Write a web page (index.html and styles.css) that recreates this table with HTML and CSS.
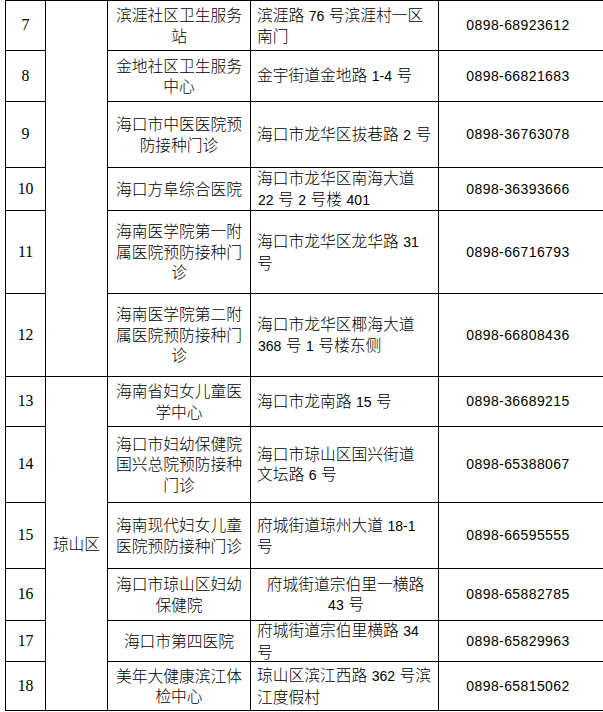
FILE: index.html
```html
<!DOCTYPE html>
<html lang="zh-CN">
<head>
<meta charset="utf-8">
<title>预防接种门诊</title>
<link rel="stylesheet" href="styles.css">
</head>
<body>
<div class="grid">
  <div class="c no">7</div>
  <div class="c dist span"></div>
  <div class="c name">滨涯社区卫生服务站</div>
  <div class="c addr"><p class="t">滨涯路 <span class="n">76</span> 号滨涯村一区<br>南门</p></div>
  <div class="c tel">0898-68923612</div>

  <div class="c no">8</div>
  <div class="c name">金地社区卫生服务中心</div>
  <div class="c addr"><p class="t">金宇街道金地路 <span class="n">1-4</span> 号</p></div>
  <div class="c tel">0898-66821683</div>

  <div class="c no">9</div>
  <div class="c name">海口市中医医院预防接种门诊</div>
  <div class="c addr"><p class="t">海口市龙华区拔巷路 <span class="n">2</span> 号</p></div>
  <div class="c tel">0898-36763078</div>

  <div class="c no">10</div>
  <div class="c name">海口方阜综合医院</div>
  <div class="c addr"><p class="t">海口市龙华区南海大道<br><span class="n">22</span> 号 <span class="n">2</span> 号楼 <span class="n">401</span></p></div>
  <div class="c tel">0898-36393666</div>

  <div class="c no">11</div>
  <div class="c name">海南医学院第一附属医院预防接种门诊</div>
  <div class="c addr"><p class="t">海口市龙华区龙华路 <span class="n">31</span><br>号</p></div>
  <div class="c tel">0898-66716793</div>

  <div class="c no">12</div>
  <div class="c name">海南医学院第二附属医院预防接种门诊</div>
  <div class="c addr"><p class="t">海口市龙华区椰海大道<br><span class="n">368</span> 号 <span class="n">1</span> 号楼东侧</p></div>
  <div class="c tel">0898-66808436</div>

  <div class="c no">13</div>
  <div class="c dist span">琼山区</div>
  <div class="c name">海南省妇女儿童医学中心</div>
  <div class="c addr"><p class="t">海口市龙南路 <span class="n">15</span> 号</p></div>
  <div class="c tel">0898-36689215</div>

  <div class="c no">14</div>
  <div class="c name">海口市妇幼保健院国兴总院预防接种门诊</div>
  <div class="c addr"><p class="t">海口市琼山区国兴街道<br>文坛路 <span class="n">6</span> 号</p></div>
  <div class="c tel">0898-65388067</div>

  <div class="c no">15</div>
  <div class="c name">海南现代妇女儿童医院预防接种门诊</div>
  <div class="c addr"><p class="t">府城街道琼州大道 <span class="n">18-1</span><br>号</p></div>
  <div class="c tel">0898-66595555</div>

  <div class="c no">16</div>
  <div class="c name">海口市琼山区妇幼保健院</div>
  <div class="c addr"><p class="t center">府城街道宗伯里一横路<br><span class="n">43</span> 号</p></div>
  <div class="c tel">0898-65882785</div>

  <div class="c no">17</div>
  <div class="c name">海口市第四医院</div>
  <div class="c addr"><p class="t">府城街道宗伯里横路 <span class="n">34</span><br>号</p></div>
  <div class="c tel">0898-65829963</div>

  <div class="c no">18</div>
  <div class="c name">美年大健康滨江体检中心</div>
  <div class="c addr"><p class="t">琼山区滨江西路 <span class="n">362</span> 号滨<br>江度假村</p></div>
  <div class="c tel">0898-65815062</div>
</div>
</body>
</html>
```

FILE: styles.css
```css
html, body {
  margin: 0;
  padding: 0;
  background: #ffffff;
}

body {
  font-family: "Noto Sans CJK SC", sans-serif;
  font-size: 15.75px;
  font-weight: 300;
  line-height: 20.5px;
  color: #000000;
}

.grid {
  display: grid;
  margin-left: 5px;
  width: 599px;
  grid-template-columns: 40px 62px 143px 188px 165px;
  grid-template-rows: 50px 51px 66px 43px 83px 83px 50px 76px 66px 52px 41px 49px;
  border-top: 1px solid #000;
  border-left: 1px solid #000;
}

.c {
  border-right: 1px solid #000;
  border-bottom: 1px solid #000;
  display: flex;
  flex-direction: column;
  justify-content: center;
  text-align: center;
  min-width: 0;
}

.span {
  grid-row: span 6;
}

.no {
  font-family: "Liberation Serif", serif;
  font-size: 15.75px;
  font-weight: 400;
}

.dist {
  padding-top: 2px;
}

.name {
  padding: 0 6px;
}

.addr {
  padding: 0 4px 0 6px;
}

.t {
  margin: 0;
  text-align: left;
}

.t.center {
  text-align: center;
}

.n {
  font-family: "Liberation Sans", sans-serif;
  font-size: 14px;
  font-weight: 400;
  padding: 0 1px;
}

.tel {
  font-family: "Liberation Sans", sans-serif;
  font-size: 14px;
  font-weight: 400;
  letter-spacing: 0.4px;
  padding-right: 6px;
}
```
